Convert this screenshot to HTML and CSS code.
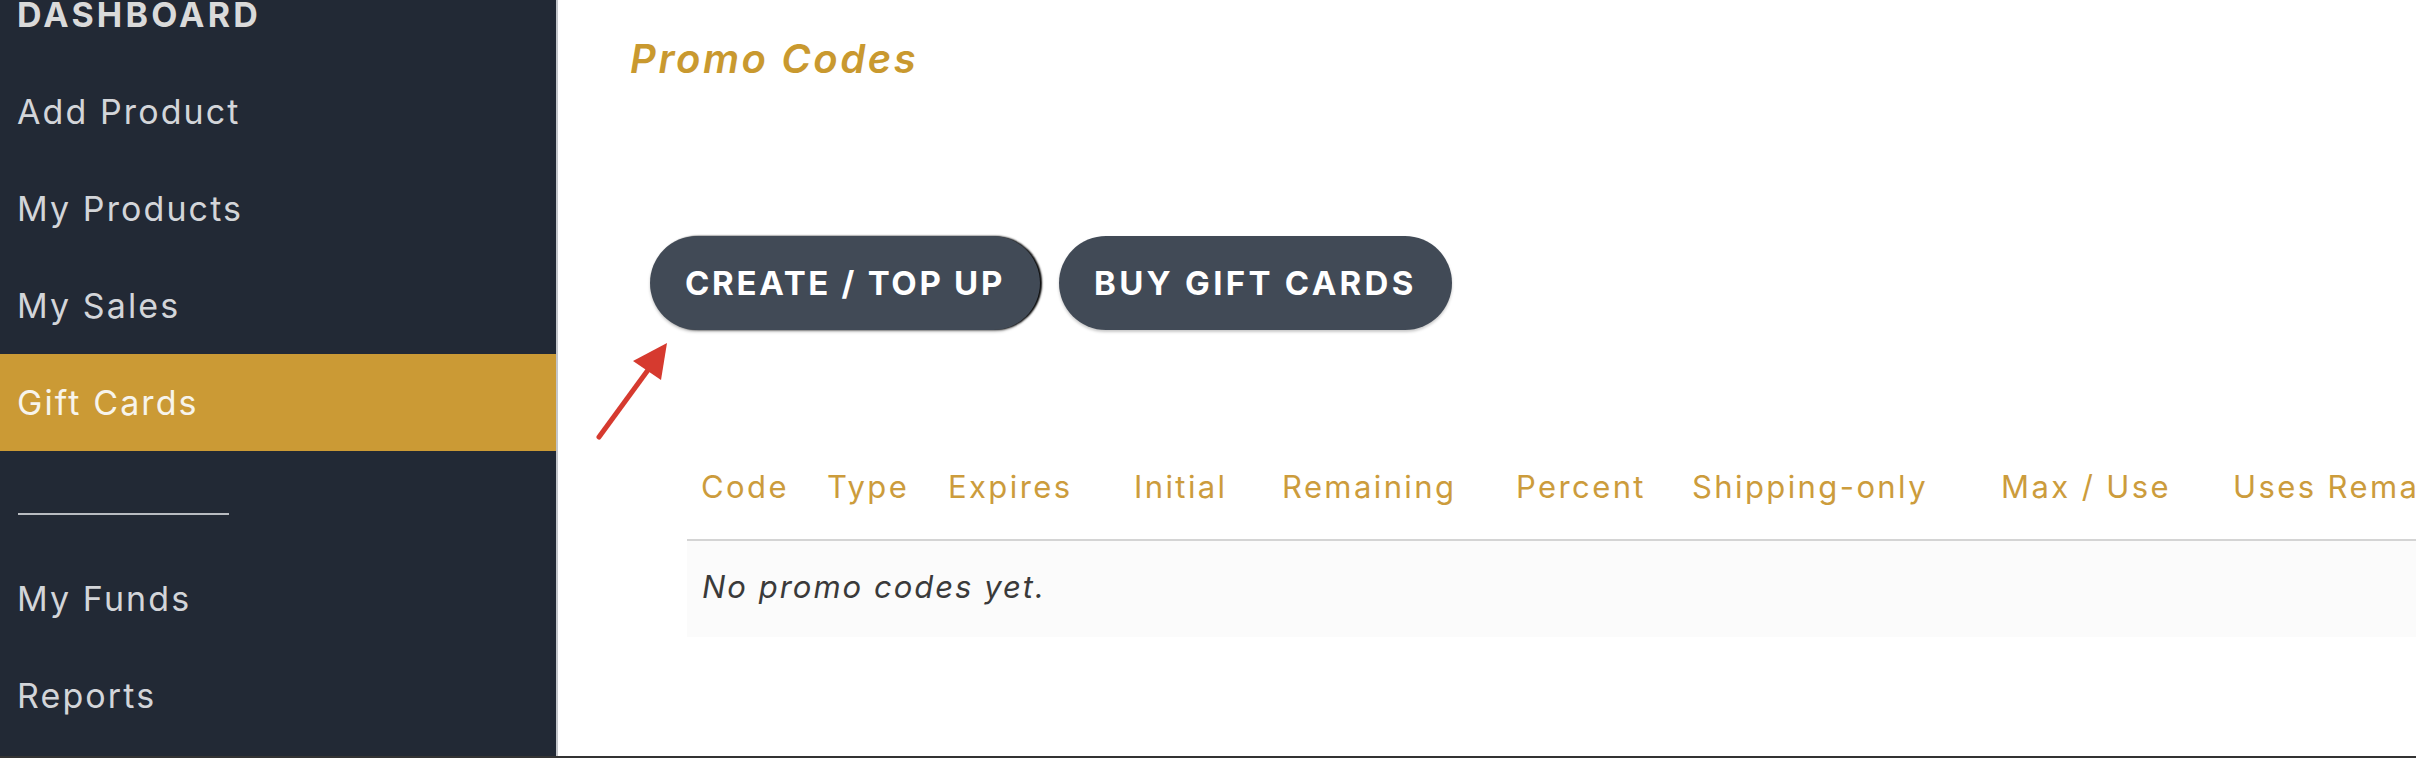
FILE: index.html
```html
<!DOCTYPE html>
<html lang="en">
<head>
<meta charset="utf-8">
<title>Promo Codes</title>
<link rel="stylesheet" href="styles.css">
</head>
<body>
<div class="app">
  <aside class="sidebar">
    <div class="nav-head">DASHBOARD</div>
    <a class="nav-item">Add Product</a>
    <a class="nav-item">My Products</a>
    <a class="nav-item">My Sales</a>
    <a class="nav-item active">Gift Cards</a>
    <div class="nav-sep"><span class="sep-line"></span></div>
    <a class="nav-item">My Funds</a>
    <a class="nav-item">Reports</a>
  </aside>
  <main class="main">
    <h1 class="title">Promo Codes</h1>
    <div class="actions">
      <button class="btn btn-focus">CREATE / TOP UP</button>
      <button class="btn btn-gift">BUY GIFT CARDS</button>
    </div>
    <div class="table">
      <div class="thead">
        <div class="th">Code</div>
        <div class="th">Type</div>
        <div class="th">Expires</div>
        <div class="th">Initial</div>
        <div class="th">Remaining</div>
        <div class="th">Percent</div>
        <div class="th">Shipping-only</div>
        <div class="th">Max / Use</div>
        <div class="th">Uses Remaining</div>
      </div>
      <div class="trow empty">
        <div class="td">No promo codes yet.</div>
      </div>
    </div>
    <svg class="arrow" width="90" height="110" viewBox="0 0 90 110" aria-hidden="true">
      <line x1="9" y1="102" x2="58" y2="35" stroke="#d63a2f" stroke-width="5" stroke-linecap="round"/>
      <polygon points="77,8 43,26 71,45" fill="#d63a2f"/>
    </svg>
  </main>
</div>
<div class="bottom-bar"></div>
</body>
</html>
```
FILE: styles.css
```css
* { box-sizing: border-box; }

html, body {
  margin: 0;
  padding: 0;
  background: #ffffff;
  font-family: Inter, "Open Sans", "DejaVu Sans", sans-serif;
  overflow: hidden;
}

.app {
  display: flex;
  height: 756px;
  overflow: hidden;
}

.sidebar {
  width: 558px;
  flex: 0 0 558px;
  background: #222935;
  border-right: 2px solid #c3c6cb;
  display: flex;
  flex-direction: column;
  overflow: hidden;
}

.nav-head,
.nav-item {
  height: 97px;
  flex: 0 0 97px;
  display: flex;
  align-items: center;
  padding-left: 17px;
  font-size: 34px;
  letter-spacing: 2.1px;
  color: #d3d5d9;
  text-decoration: none;
}

.nav-head {
  margin-top: -34px;
  font-weight: 700;
  letter-spacing: 3.2px;
  color: #dadada;
}

.nav-item.active {
  background: #cb9a35;
  color: #f7f4ec;
}

.nav-sep {
  height: 99px;
  flex: 0 0 99px;
  padding-top: 62px;
  padding-left: 18px;
}

.sep-line {
  display: block;
  width: 211px;
  height: 2px;
  background: #b9bcc1;
}

.main {
  flex: 1;
  position: relative;
  overflow: hidden;
  background: #ffffff;
}

.title {
  margin: 35px 0 0 0;
  padding-left: 72px;
  font-size: 40px;
  line-height: 48px;
  letter-spacing: 2.6px;
  font-style: italic;
  font-weight: 600;
  color: #c9992f;
}

.actions {
  display: flex;
  gap: 19px;
  margin-top: 153px;
  padding-left: 92px;
}

.btn {
  height: 94px;
  padding: 0 35px;
  border: none;
  border-radius: 47px;
  background: #414a56;
  color: #ffffff;
  font-family: inherit;
  font-size: 33px;
  font-weight: 700;
  letter-spacing: 2.7px;
  box-shadow: 0 2px 3px rgba(0, 0, 0, 0.22);
  display: inline-flex;
  align-items: center;
}

.btn-gift {
  letter-spacing: 3.3px;
}

.btn-focus {
  box-shadow: 2px 0 2px #000000, 0 2px 3px rgba(0, 0, 0, 0.22);
}

.table {
  margin-top: 109px;
  margin-left: 129px;
  width: 1832px;
}

.thead {
  display: grid;
  grid-template-columns: 126px 121px 186px 148px 234px 176px 309px 232px 300px;
  height: 102px;
  padding-bottom: 6px;
  align-items: center;
  border-bottom: 2px solid #d4d4d4;
}

.th {
  padding-left: 14px;
  font-size: 31px;
  letter-spacing: 2.4px;
  color: #cc9c3c;
  white-space: nowrap;
}

.trow {
  height: 96px;
  display: flex;
  align-items: center;
  padding-bottom: 6px;
  background: #fbfbfb;
}

.td {
  padding-left: 15px;
  font-size: 31px;
  letter-spacing: 2px;
  font-style: italic;
  color: #3a3a3a;
}

.arrow {
  position: absolute;
  left: 32px;
  top: 335px;
}

.bottom-bar {
  height: 2px;
  background: #333333;
}
```
